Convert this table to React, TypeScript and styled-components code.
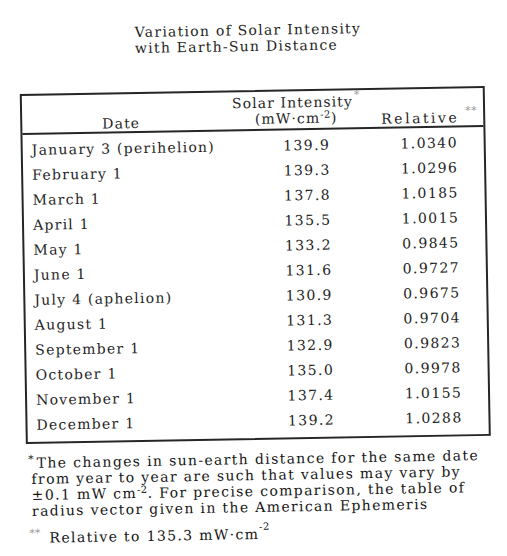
import styled, { createGlobalStyle } from 'styled-components'

const rows = [
	{ date: 'January 3 (perihelion)', intensity: '139.9', relative: '1.0340' },
	{ date: 'February 1', intensity: '139.3', relative: '1.0296' },
	{ date: 'March 1', intensity: '137.8', relative: '1.0185' },
	{ date: 'April 1', intensity: '135.5', relative: '1.0015' },
	{ date: 'May 1', intensity: '133.2', relative: '0.9845' },
	{ date: 'June 1', intensity: '131.6', relative: '0.9727' },
	{ date: 'July 4 (aphelion)', intensity: '130.9', relative: '0.9675' },
	{ date: 'August 1', intensity: '131.3', relative: '0.9704' },
	{ date: 'September 1', intensity: '132.9', relative: '0.9823' },
	{ date: 'October 1', intensity: '135.0', relative: '0.9978' },
	{ date: 'November 1', intensity: '137.4', relative: '1.0155' },
	{ date: 'December 1', intensity: '139.2', relative: '1.0288' },
]

export default function App() {
	return (
		<>
			<GlobalStyle />
			<Page>
				<Title>
					Variation of Solar Intensity
					<br />
					with Earth-Sun Distance
				</Title>
				<Table>
					<HeaderRow>
						<DateHead>Date</DateHead>
						<IntensityHead>
							<span>
								Solar Intensity<Star>*</Star>
							</span>
							<span>
								(mW·cm<Sup>-2</Sup>)
							</span>
						</IntensityHead>
						<RelativeHead>
							Relative<Star $gap>**</Star>
						</RelativeHead>
					</HeaderRow>
					<Body>
						{rows.map(r => (
							<Row key={r.date}>
								<DateCell>{r.date}</DateCell>
								<NumCell>{r.intensity}</NumCell>
								<NumCell $shift={9}>{r.relative}</NumCell>
							</Row>
						))}
					</Body>
				</Table>
				<Notes>
					<Note>
						<NoteMark>*</NoteMark>The changes in sun-earth distance for the same date
						<br />
						from year to year are such that values may vary by
						<br />
						±0.1 mW cm<Sup>-2</Sup>. For precise comparison, the table of
						<br />
						radius vector given in the American Ephemeris
					</Note>
					<Note $gapTop>
						<NoteMark $light>**</NoteMark>Relative to 135.3 mW·cm<HighSup>-2</HighSup>
					</Note>
				</Notes>
			</Page>
		</>
	)
}

const GlobalStyle = createGlobalStyle`
	html, body {
		margin: 0;
		background: #fff;
		overflow: hidden;
	}
	body {
		font-family: 'DejaVu Serif', 'Liberation Serif', serif;
		color: #1e1e1e;
	}
`

const Page = styled.div`
	width: 507px;
	height: 556px;
	box-sizing: border-box;
	padding: 22px 19px 0 23px;
	transform: rotate(-1deg);
	transform-origin: 253px 278px;
`

const Title = styled.div`
	margin-left: 116px;
	font-size: 14px;
	line-height: 16px;
	letter-spacing: 1.25px;
`

const Table = styled.div`
	margin-top: 36px;
	width: 465px;
	box-sizing: border-box;
	border: 2px solid #262626;
`

const HeaderRow = styled.div`
	display: grid;
	grid-template-columns: 225px 118px 1fr;
	align-items: end;
	height: 37px;
	border-bottom: 2px solid #262626;
	font-size: 14px;
	line-height: 16px;
	letter-spacing: 1.1px;
`

const DateHead = styled.div`
	padding: 0 0 0 80px;
`

const IntensityHead = styled.div`
	display: flex;
	flex-direction: column;
	align-items: center;
	padding: 0 20px 2px 0;
	white-space: nowrap;
`

const RelativeHead = styled.div`
	padding: 0 0 0 16px;
	white-space: nowrap;
	letter-spacing: 2.5px;
`

const Star = styled.sup<{ $gap?: boolean }>`
	font-size: 11px;
	color: #999;
	vertical-align: 8px;
	line-height: 0;
	letter-spacing: 0.5px;
	margin-left: ${({ $gap }) => ($gap ? '6px' : '1px')};
`

const Sup = styled.sup`
	font-size: 10px;
	vertical-align: 5px;
	line-height: 0;
	letter-spacing: 0.5px;
`

const HighSup = styled(Sup)`
	vertical-align: 9px;
`

const Body = styled.div`
	padding: 2px 0 5px;
`

const Row = styled.div`
	display: grid;
	grid-template-columns: 225px 118px 1fr;
	align-items: center;
	height: 25px;
	font-size: 14px;
	letter-spacing: 1.25px;
`

const DateCell = styled.div`
	padding-left: 9px;
	white-space: nowrap;
`

const NumCell = styled.div<{ $shift?: number }>`
	text-align: center;
	letter-spacing: 1.4px;
	padding-left: ${({ $shift }) => $shift ?? 0}px;
`

const Notes = styled.div`
	padding: 11px 0 0 5px;
`

const Note = styled.div<{ $gapTop?: boolean }>`
	font-size: 14px;
	line-height: 16px;
	letter-spacing: 1.35px;
	white-space: nowrap;
	color: #141414;
	margin-top: ${({ $gapTop }) => ($gapTop ? '11px' : '0')};
`

const NoteMark = styled.span<{ $light?: boolean }>`
	display: inline-block;
	margin-left: -3px;
	margin-right: ${({ $light }) => ($light ? '9px' : '3px')};
	font-size: 11px;
	letter-spacing: 0;
	vertical-align: ${({ $light }) => ($light ? '6px' : '5px')};
	line-height: 0;
	color: ${({ $light }) => ($light ? '#999' : '#141414')};
`
